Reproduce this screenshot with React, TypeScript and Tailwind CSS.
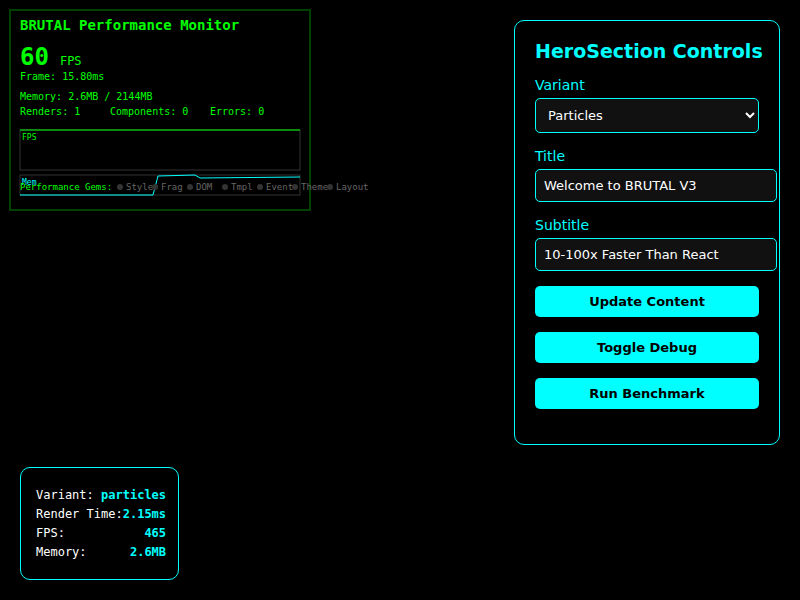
import { useState } from "react";

const gems = ["Style", "Frag", "DOM", "Tmpl", "Event", "Theme", "Layout"];

const fieldClass =
  "rounded-[5px] border border-[#00ffff] bg-[#111111] text-[13px] text-white outline-none";

function PerformanceMonitor() {
  return (
    <section className="w-[302px] border-2 border-[#004000] px-[9px] pt-[6px] pb-3 font-['DejaVu_Sans_Mono',monospace] text-[10px] leading-[15px] text-[#00ff00]">
      <h2 className="text-[14px] leading-4 font-bold">BRUTAL Performance Monitor</h2>
      <div className="mt-[10px] flex items-baseline gap-[11px]">
        <span className="text-[24px] leading-7 font-bold">60</span>
        <span className="text-[12px]">FPS</span>
      </div>
      <p className="-mt-[2px]">Frame: 15.80ms</p>
      <p className="mt-[5px]">Memory: 2.6MB / 2144MB</p>
      <div className="flex">
        <span className="w-[90px]">Renders: 1</span>
        <span className="w-[100px]">Components: 0</span>
        <span>Errors: 0</span>
      </div>
      <div className="relative mt-[10px]">
        <svg className="-ml-px block h-[68px] w-[282px]" viewBox="19 129 282 68" fill="none" aria-hidden="true">
          <rect x="20" y="130" width="280" height="40" stroke="#333333" />
          <path d="M20 130H300" stroke="#00ff00" />
          <rect x="20" y="175" width="280" height="20" stroke="#333333" />
          <path d="M20 195H153L158 176L195 175L200 178L300 177" stroke="#00ffff" />
        </svg>
        <span className="absolute top-1 left-[2px] text-[8px] leading-[10px] text-[#00ff00]">FPS</span>
        <span className="absolute top-[49px] left-[2px] text-[8px] leading-[10px] text-[#00ffff]">Mem</span>
        <div className="absolute top-[52px] left-0 flex text-[9px] leading-3 whitespace-nowrap">
          <span className="w-[97px]">Performance Gems:</span>
          {gems.map((gem) => (
            <span key={gem} className="flex w-[35px] items-center gap-[3px] text-[#666666]">
              <span className="size-[6px] shrink-0 rounded-full bg-[#333333]" />
              {gem}
            </span>
          ))}
        </div>
      </div>
    </section>
  );
}

function TextField({ id, label, initial }: { id: string; label: string; initial: string }) {
  const [value, setValue] = useState(initial);
  return (
    <div>
      <label htmlFor={id} className="mb-[5px] block leading-4">
        {label}
      </label>
      <input
        id={id}
        value={value}
        onChange={(e) => setValue(e.target.value)}
        className={`${fieldClass} -mr-[18px] block h-[33px] w-[calc(100%+18px)] px-2`}
      />
    </div>
  );
}

function Controls() {
  const actions = ["Update Content", "Toggle Debug", "Run Benchmark"];
  return (
    <section className="flex w-[266px] flex-col gap-[15px] rounded-[10px] border border-[#00ffff] px-5 pt-[18px] pb-[35px] font-['DejaVu_Sans',sans-serif] text-[14px] text-[#00ffff]">
      <h2 className="-mb-px text-[19px] leading-6 font-bold whitespace-nowrap">HeroSection Controls</h2>
      <div>
        <label htmlFor="variant" className="mb-[5px] block leading-4">
          Variant
        </label>
        <select id="variant" defaultValue="particles" className={`${fieldClass} block h-[35px] w-full px-2`}>
          <option value="particles">Particles</option>
        </select>
      </div>
      <TextField id="title" label="Title" initial="Welcome to BRUTAL V3" />
      <TextField id="subtitle" label="Subtitle" initial="10-100x Faster Than React" />
      {actions.map((action) => (
        <button
          key={action}
          type="button"
          className="h-[31px] w-full rounded-[5px] bg-[#00ffff] text-[13px] font-bold text-black"
        >
          {action}
        </button>
      ))}
    </section>
  );
}

function Stats() {
  const rows = [
    ["Variant:", "particles"],
    ["Render Time:", "2.15ms"],
    ["FPS:", "465"],
    ["Memory:", "2.6MB"],
  ];
  return (
    <dl className="flex w-fit flex-col gap-[5px] rounded-[10px] border border-[#00ffff] py-5 pr-3 pl-[15px] font-['DejaVu_Sans_Mono',monospace] text-[12px] leading-[14px] text-white">
      {rows.map(([name, value]) => (
        <div key={name} className="flex justify-between">
          <dt>{name}</dt>
          <dd className="font-bold text-[#00ffff]">{value}</dd>
        </div>
      ))}
    </dl>
  );
}

export default function App() {
  return (
    <main className="flex min-h-screen items-stretch justify-between bg-black p-5">
      <div className="flex flex-col items-start justify-between">
        <div className="-mt-[11px] -ml-[11px]">
          <PerformanceMonitor />
        </div>
        <Stats />
      </div>
      <div>
        <Controls />
      </div>
    </main>
  );
}
